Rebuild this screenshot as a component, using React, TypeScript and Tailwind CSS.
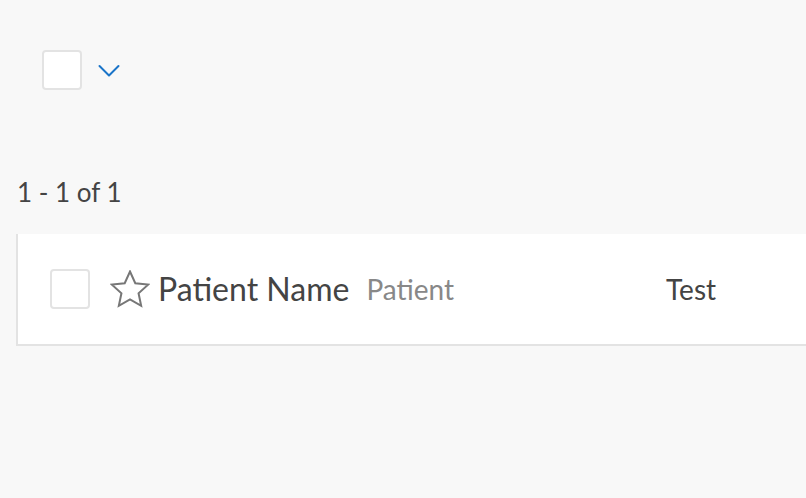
export default function App() {
  return (
    <div className="h-[498px] w-[806px] overflow-hidden bg-[#f8f8f8] font-['Lato',sans-serif] text-[#444]">
      <div className="flex items-center gap-[16px] pl-[42px] pt-[50px]">
        <div className="h-10 w-10 rounded-[4px] border-2 border-[#e3e3e3] bg-white" />
        <svg width="22" height="14" viewBox="0 0 22 14" fill="none" className="mt-[1px]">
          <path d="M1.5 2 L11 11.5 L20.5 2" stroke="#1a74c8" strokeWidth="2" strokeLinecap="round" strokeLinejoin="round" />
        </svg>
      </div>

      <p className="mt-[86px] pl-[17px] text-[26px] leading-[32px] text-[#444]">1 - 1 of 1</p>

      <div className="ml-4 mt-[26px] flex h-[112px] items-center border-b-2 border-l-2 border-[#e3e3e3] bg-white pl-[32px]">
        <div className="h-10 w-10 rounded-[4px] border-2 border-[#e3e3e3] bg-white" />
        <svg width="40" height="38" viewBox="0 0 40 38" fill="none" className="ml-[20px]">
          <polygon
            points="20,1.5 25.29,13.22 38.07,14.63 28.56,23.28 31.17,35.87 20,29.5 8.83,35.87 11.44,23.28 1.93,14.63 14.71,13.22"
            stroke="#777"
            strokeWidth="2"
            strokeLinejoin="miter"
          />
        </svg>
        <span className="ml-[8px] text-[32px] text-[#444]">Patient Name</span>
        <span className="ml-[17px] text-[28px] text-[#888]">Patient</span>
        <span className="ml-[212px] text-[28px] text-[#444]">Test</span>
      </div>
    </div>
  );
}
